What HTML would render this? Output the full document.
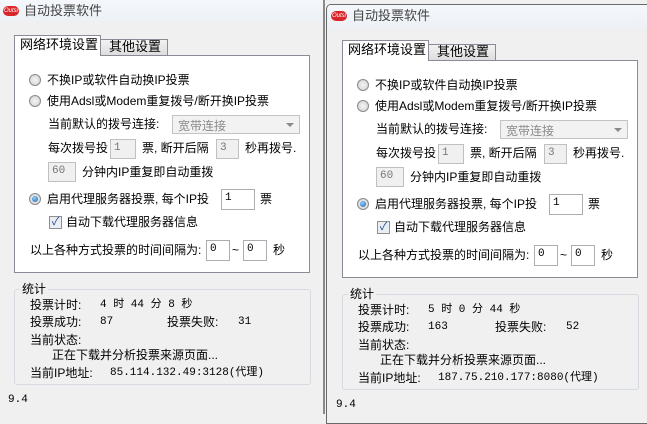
<!DOCTYPE html>
<html><head><meta charset="utf-8"><style>
*{margin:0;padding:0;box-sizing:border-box}
body{width:647px;height:414px;overflow:hidden;background:#f0f0f0;font-family:"Liberation Sans","Noto Sans CJK SC",sans-serif;font-size:12px;color:#000;position:relative}
.win{position:absolute;background:#f0f0f0;overflow:hidden}
.w2{left:326px;top:4px;width:330px;height:420px;border:1px solid #6a6a6a;border-radius:5px 0 0 0}
.w2 .in{position:absolute;left:1px;top:0px}
.in{position:absolute;left:0;top:0;width:330px;height:414px}
.t{position:absolute;white-space:nowrap;line-height:14px}
.tb{position:absolute;left:0;top:0;width:330px;height:22px;background:linear-gradient(#f4f7fb,#edf1f6)}
.ico{position:absolute;left:3px;top:6px;width:16px;height:10px;background:#d8262b;border-radius:5px;color:#fff;font-size:6px;line-height:10px;text-align:center;font-style:italic}
.title{left:24px;top:4px;font-size:13px;color:#444}
.tab1{position:absolute;left:14px;top:35px;width:87px;height:21px;background:#fff;border:1px solid #898c95;border-bottom:none;z-index:2}
.tab2{position:absolute;left:100px;top:39px;width:68px;height:17px;background:linear-gradient(#f2f2f2,#dcdcdc);border:1px solid #898c95;border-bottom:none}
.panel{position:absolute;left:14px;top:55px;width:296px;height:218px;background:#fff;border:1px solid #898c95}
.radio{position:absolute;width:12px;height:12px;border-radius:50%;border:1px solid #8a8a8a;background:radial-gradient(#f4f4f4,#d0d0d0)}
.radio.on::after{content:"";position:absolute;left:2px;top:2px;width:6px;height:6px;border-radius:50%;background:radial-gradient(circle at 40% 35%,#8fd0ff,#1a5fa8)}
.box{position:absolute;border:1px solid #abadb3;background:#fff;font-size:11px;line-height:14px;padding:1px 3px;font-family:"Liberation Mono",monospace}
.box.dis{background:#f0f0f0;color:#777;border-color:#c0c0c0}
.combo{position:absolute;left:172px;top:115px;width:128px;height:19px;border:1px solid #c3c3c3;background:#f2f2f2;color:#8a8a8a;padding:1px 5px}
.combo::after{content:"";position:absolute;right:5px;top:7px;border:4px solid transparent;border-top:4px solid #8a8a8a}
.chk{position:absolute;left:49px;top:216px;width:13px;height:13px;border:1px solid #8f8f8f;background:#e9eef5;color:#2a4a8a;font-size:11px;line-height:11px;text-align:center}
.grp{position:absolute;left:14px;top:289px;width:297px;height:96px;border:1px solid #d5dbe0;border-radius:3px}
.mono{font-family:"Liberation Mono",monospace;font-size:11px}
</style></head><body>

<div class="win" style="left:0;top:0;width:326px;height:414px">
<div class="in" id="a">
<div class="tb"></div><div class="ico">Outsi</div><div class="t title">自动投票软件</div>
<div class="tab2"></div><div class="t" style="left:109px;top:40px;font-size:13px">其他设置</div>
<div class="panel"></div>
<div class="tab1"></div><div class="t" style="left:20px;top:38px;font-size:13px;z-index:3">网络环境设置</div>
<div class="radio" style="left:29px;top:74px"></div><div class="t" style="left:47px;top:73px">不换IP或软件自动换IP投票</div>
<div class="radio" style="left:29px;top:95px"></div><div class="t" style="left:47px;top:94px">使用Adsl或Modem重复拨号/断开换IP投票</div>
<div class="t" style="left:48px;top:117px">当前默认的拨号连接:</div>
<div class="combo">宽带连接</div>
<div class="t" style="left:48px;top:141px">每次拨号投</div><div class="box dis" style="left:110px;top:139px;width:26px;height:20px">1</div>
<div class="t" style="left:142px;top:141px">票, 断开后隔</div><div class="box dis" style="left:216px;top:139px;width:23px;height:20px">3</div>
<div class="t" style="left:245px;top:141px">秒再拨号.</div>
<div class="box dis" style="left:48px;top:162px;width:28px;height:20px">60</div><div class="t" style="left:82px;top:165px">分钟内IP重复即自动重拨</div>
<div class="radio on" style="left:29px;top:193px"></div><div class="t" style="left:47px;top:192px">启用代理服务器投票, 每个IP投</div>
<div class="box" style="left:221px;top:189px;width:34px;height:21px">1</div><div class="t" style="left:260px;top:192px">票</div>
<div class="chk">✓</div><div class="t" style="left:66px;top:215px">自动下载代理服务器信息</div>
<div class="t" style="left:30px;top:243px">以上各种方式投票的时间间隔为:</div>
<div class="box" style="left:206px;top:240px;width:24px;height:21px">0</div><div class="t" style="left:232px;top:243px">~</div>
<div class="box" style="left:243px;top:240px;width:24px;height:21px">0</div><div class="t" style="left:273px;top:243px">秒</div>
<div class="grp"></div><div class="t" style="left:20px;top:282px;background:#f0f0f0;padding:0 2px">统计</div>
<div class="t" style="left:30px;top:298px">投票计时:</div><div class="t mono" style="left:100px;top:298px">4 时 44 分 8 秒</div>
<div class="t" style="left:30px;top:315px">投票成功:</div><div class="t mono" style="left:100px;top:315px">87</div>
<div class="t" style="left:167px;top:315px">投票失败:</div><div class="t mono" style="left:238px;top:315px">31</div>
<div class="t" style="left:30px;top:333px">当前状态:</div>
<div class="t" style="left:52px;top:348px">正在下载并分析投票来源页面...</div>
<div class="t" style="left:30px;top:366px">当前IP地址:</div><div class="t mono" style="left:110px;top:366px">85.114.132.49:3128(代理)</div>
<div class="t mono" style="left:8px;top:393px">9.4</div>
</div>
<div style="position:absolute;left:323px;top:0;width:2px;height:414px;background:#8a8a8a"></div>
</div>

<div class="win w2"><div class="in">
<div class="tb" style="height:24px"></div><div class="ico">Outsi</div><div class="t title">自动投票软件</div>
<div class="tab2"></div><div class="t" style="left:109px;top:40px;font-size:13px">其他设置</div>
<div class="panel"></div>
<div class="tab1"></div><div class="t" style="left:20px;top:38px;font-size:13px;z-index:3">网络环境设置</div>
<div class="radio" style="left:29px;top:74px"></div><div class="t" style="left:47px;top:73px">不换IP或软件自动换IP投票</div>
<div class="radio" style="left:29px;top:95px"></div><div class="t" style="left:47px;top:94px">使用Adsl或Modem重复拨号/断开换IP投票</div>
<div class="t" style="left:48px;top:117px">当前默认的拨号连接:</div>
<div class="combo">宽带连接</div>
<div class="t" style="left:48px;top:141px">每次拨号投</div><div class="box dis" style="left:110px;top:139px;width:26px;height:20px">1</div>
<div class="t" style="left:142px;top:141px">票, 断开后隔</div><div class="box dis" style="left:216px;top:139px;width:23px;height:20px">3</div>
<div class="t" style="left:245px;top:141px">秒再拨号.</div>
<div class="box dis" style="left:48px;top:162px;width:28px;height:20px">60</div><div class="t" style="left:82px;top:165px">分钟内IP重复即自动重拨</div>
<div class="radio on" style="left:29px;top:193px"></div><div class="t" style="left:47px;top:192px">启用代理服务器投票, 每个IP投</div>
<div class="box" style="left:221px;top:189px;width:34px;height:21px">1</div><div class="t" style="left:260px;top:192px">票</div>
<div class="chk">✓</div><div class="t" style="left:66px;top:215px">自动下载代理服务器信息</div>
<div class="t" style="left:30px;top:243px">以上各种方式投票的时间间隔为:</div>
<div class="box" style="left:206px;top:240px;width:24px;height:21px">0</div><div class="t" style="left:232px;top:243px">~</div>
<div class="box" style="left:243px;top:240px;width:24px;height:21px">0</div><div class="t" style="left:273px;top:243px">秒</div>
<div class="grp"></div><div class="t" style="left:20px;top:282px;background:#f0f0f0;padding:0 2px">统计</div>
<div class="t" style="left:30px;top:298px">投票计时:</div><div class="t mono" style="left:100px;top:298px">5 时 0 分 44 秒</div>
<div class="t" style="left:30px;top:315px">投票成功:</div><div class="t mono" style="left:100px;top:315px">163</div>
<div class="t" style="left:167px;top:315px">投票失败:</div><div class="t mono" style="left:238px;top:315px">52</div>
<div class="t" style="left:30px;top:333px">当前状态:</div>
<div class="t" style="left:52px;top:348px">正在下载并分析投票来源页面...</div>
<div class="t" style="left:30px;top:366px">当前IP地址:</div><div class="t mono" style="left:110px;top:366px">187.75.210.177:8080(代理)</div>
<div class="t mono" style="left:8px;top:393px">9.4</div>
</div></div>
</body></html>
